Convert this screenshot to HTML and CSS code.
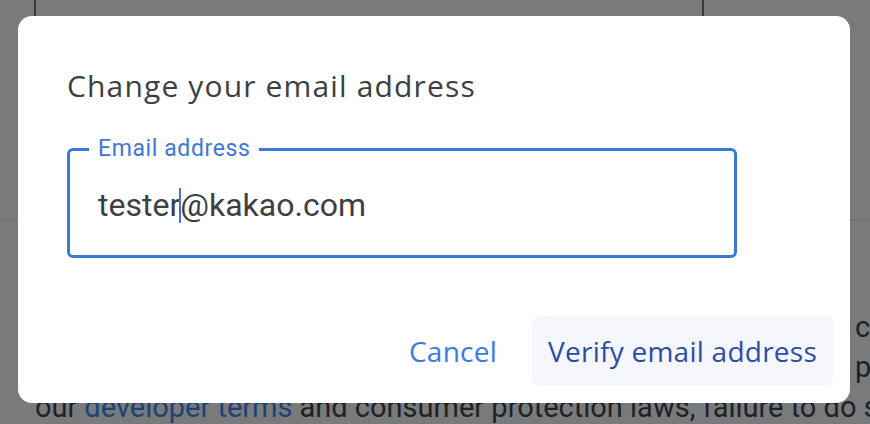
FILE: index.html
```html
<!DOCTYPE html>
<html lang="en">
<head>
<meta charset="utf-8">
<title>Change your email address</title>
<link rel="stylesheet" href="styles.css">
</head>
<body>
<div class="page">
  <div class="page-top">
    <div class="cell cell-a"></div>
    <div class="cell cell-b"></div>
    <div class="cell cell-c"></div>
  </div>
  <div class="page-body">
    <div class="line"><span class="fill">Apps that request access to sensitive Google user data must</span><span>comply with</span></div>
    <div class="line"><span class="fill">the Google API Services User Data Policy, including the</span><span>privacy</span></div>
    <div class="line">our <a class="link" href="#">developer terms</a> and consumer protection laws, failure to do so may result</div>
  </div>
</div>
<div class="scrim"></div>
<div class="dialog" role="dialog" aria-labelledby="dlg-title">
  <h2 class="title" id="dlg-title">Change your email address</h2>
  <div class="field">
    <span class="field-label">Email address</span>
    <div class="field-value">tester<span class="caret"></span>@kakao.com</div>
  </div>
  <div class="actions">
    <button class="btn btn-text">Cancel</button>
    <button class="btn btn-tonal">Verify email address</button>
  </div>
</div>
</body>
</html>
```
FILE: styles.css
```css
* { box-sizing: border-box; }
html, body { margin: 0; padding: 0; }
body {
  width: 870px;
  height: 424px;
  overflow: hidden;
  background: #ffffff;
  font-family: Roboto, "Liberation Sans", sans-serif;
  position: relative;
}
.page { width: 870px; height: 424px; overflow: hidden; }
.page-top {
  display: grid;
  grid-template-columns: 34px 670px 1fr;
  height: 220px;
  border-bottom: 1px solid #dadce0;
}
.cell-b { border-left: 2px solid #5f6368; border-right: 2px solid #5f6368; }
.page-body {
  padding: 87px 0 0 35px;
  color: #202124;
  font-size: 29px;
  line-height: 40px;
}
.line { white-space: nowrap; display: flex; }
.line .fill { flex: 0 0 820px; overflow: hidden; }
.link { color: #1a73e8; text-decoration: none; margin: 0 7px; }
.scrim {
  position: absolute;
  inset: 0;
  background: rgba(32, 33, 36, 0.6);
}
.dialog {
  position: absolute;
  left: 18px;
  top: 16px;
  width: 832px;
  height: 387px;
  background: #ffffff;
  border-radius: 14px;
  padding: 50px 17px 17px 49px;
  display: flex;
  flex-direction: column;
}
.title {
  margin: 0;
  font-family: "Open Sans", sans-serif;
  font-weight: 400;
  font-size: 30px;
  letter-spacing: 1.15px;
  line-height: 40px;
  color: #3c4043;
}
.field {
  position: relative;
  margin-top: 42px;
  width: 670px;
  height: 110px;
  border: 3px solid #3c78d8;
  border-radius: 6px;
  padding: 0 0 0 28px;
  display: flex;
  align-items: center;
}
.field-label {
  position: absolute;
  left: 19px;
  top: -16px;
  padding: 0 9px;
  background: #ffffff;
  font-size: 23px;
  letter-spacing: 0.6px;
  line-height: 28px;
  color: #3c78d8;
}
.field-value {
  font-size: 32px;
  color: #3c4043;
  margin-top: 4px;
  display: flex;
  align-items: center;
}
.caret {
  display: inline-block;
  width: 2px;
  height: 35px;
  background: #3c78d8;
  margin: 0 -1px;
}
.actions {
  margin-top: auto;
  display: flex;
  justify-content: flex-end;
  align-items: center;
  gap: 18px;
}
.btn {
  border: 0;
  background: transparent;
  font-family: "Open Sans", sans-serif;
  font-weight: 500;
  font-size: 28px;
  letter-spacing: 0.25px;
  cursor: pointer;
  height: 70px;
  border-radius: 8px;
}
.btn-text { color: #3b78e7; padding: 0 17px; }
.btn-tonal { background: #f5f7fd; color: #2a4ea6; padding: 0 16px; }
```
